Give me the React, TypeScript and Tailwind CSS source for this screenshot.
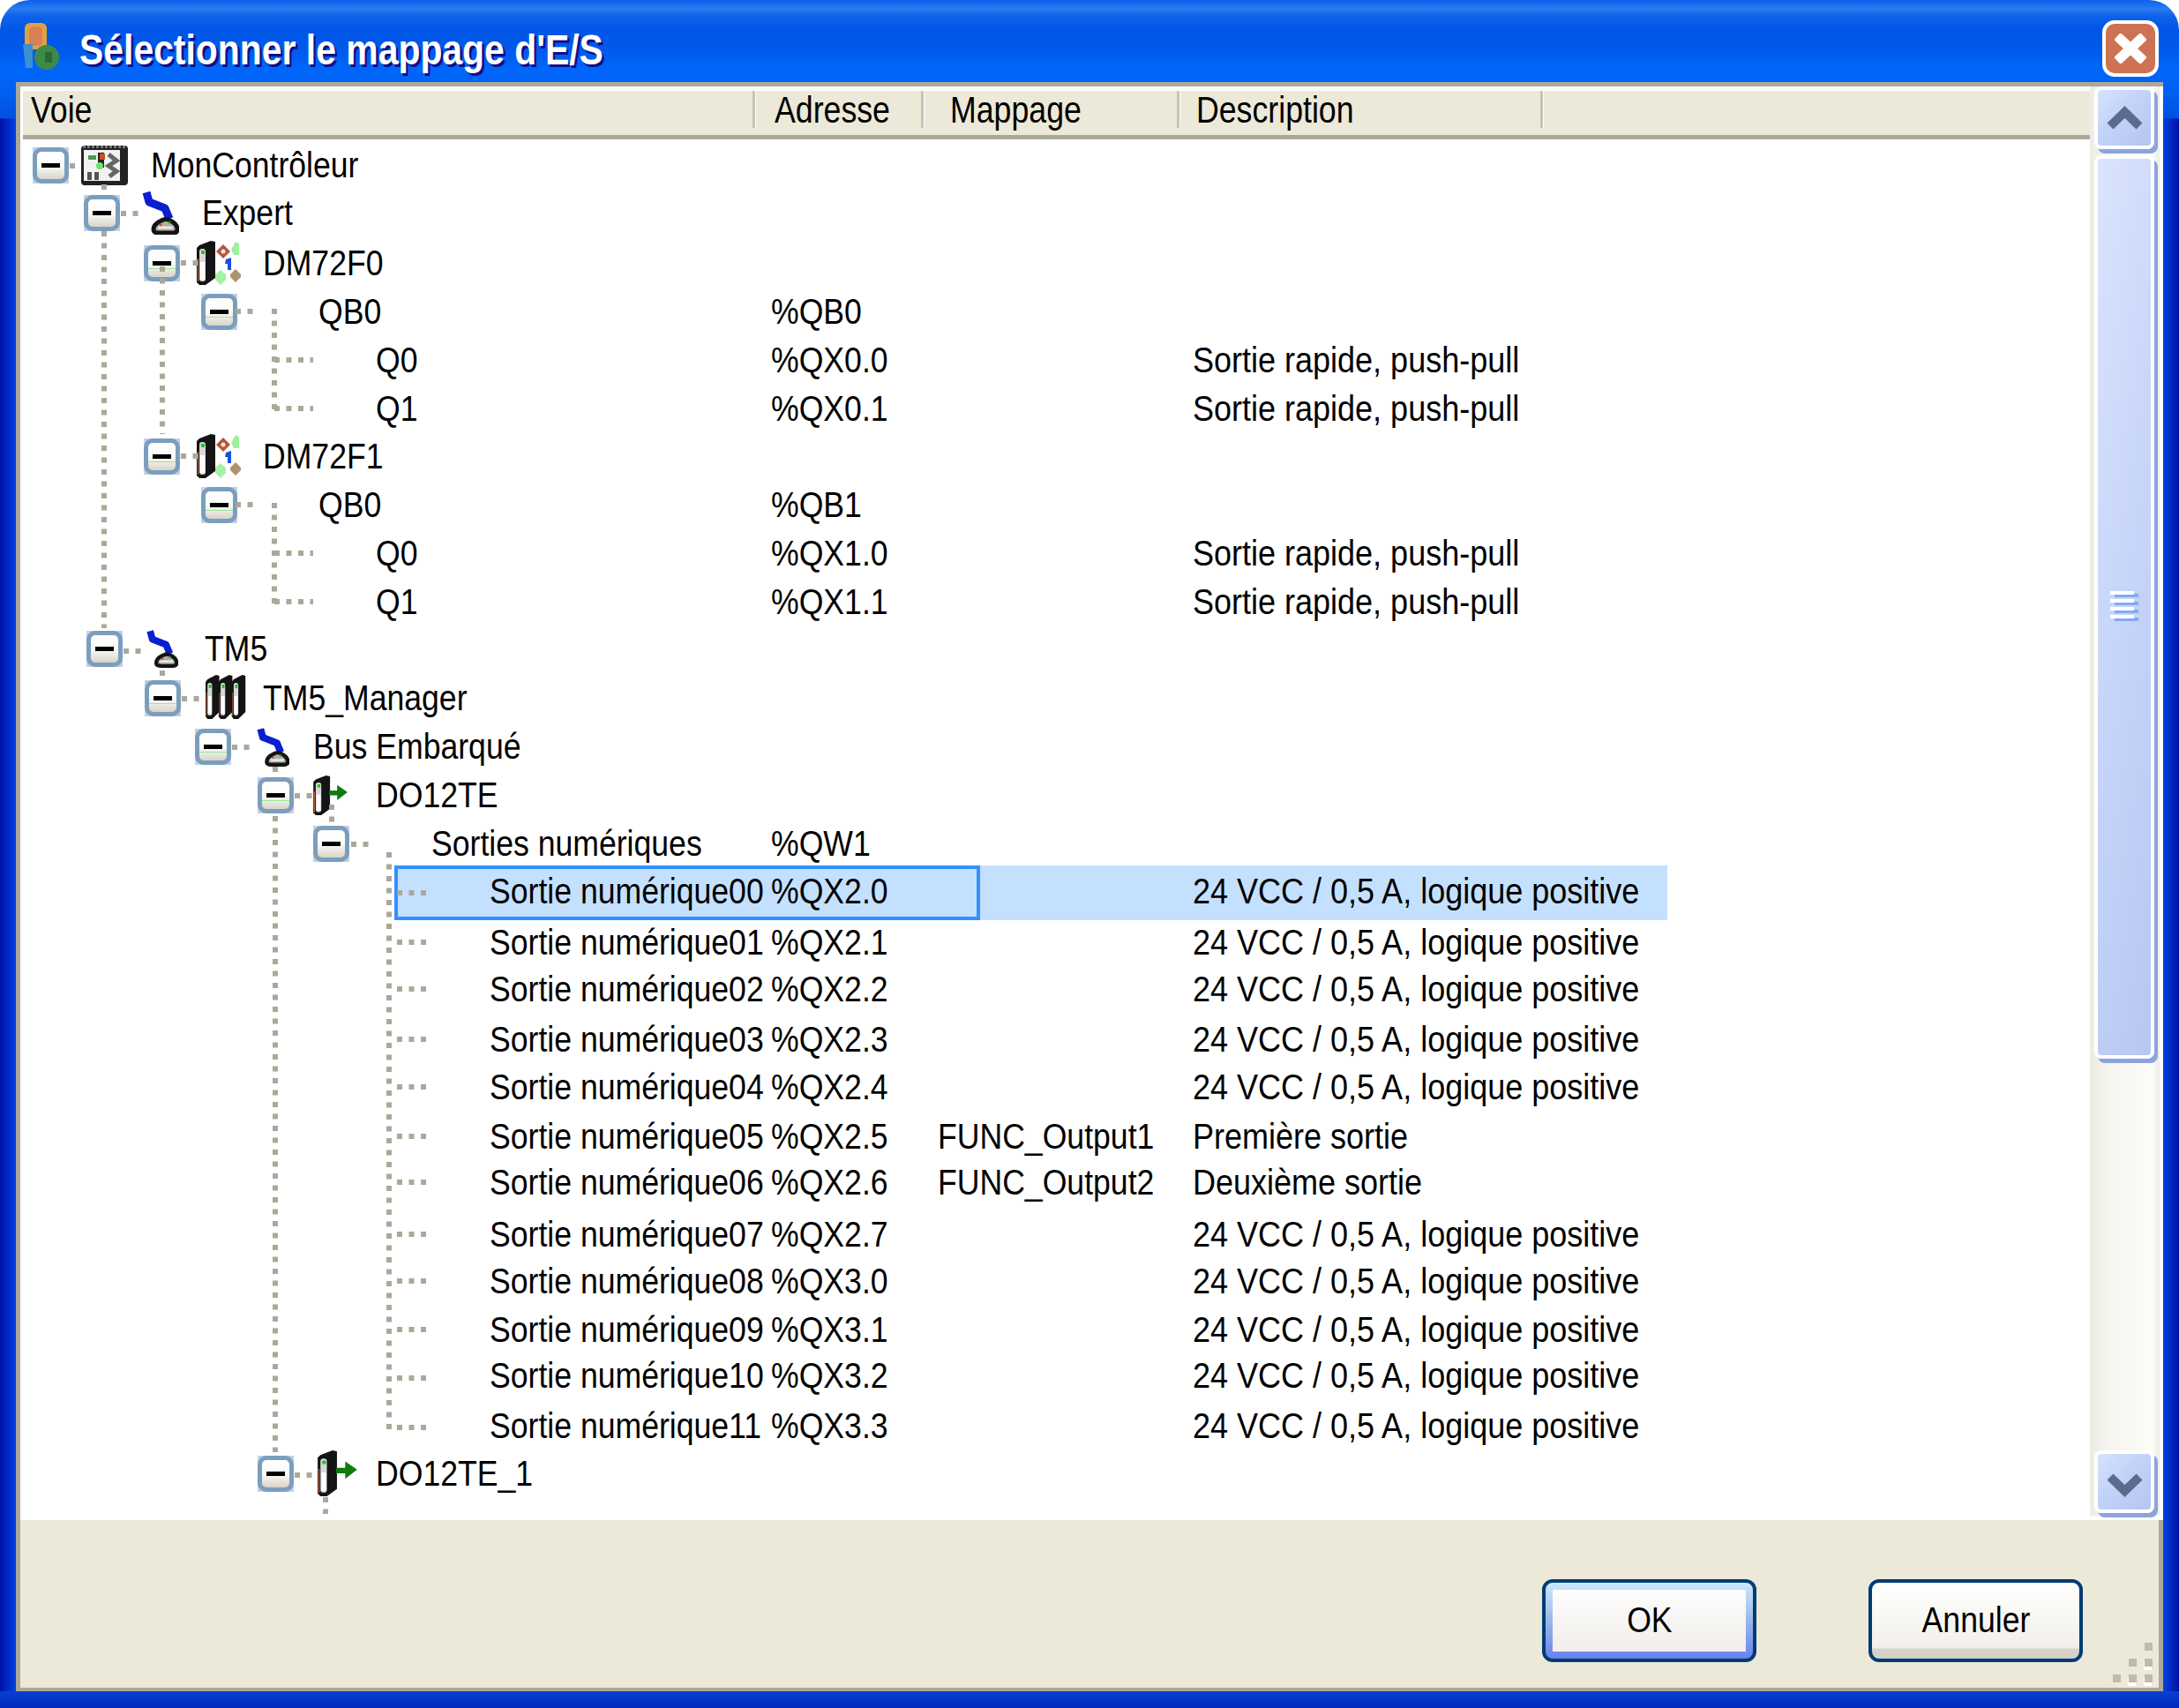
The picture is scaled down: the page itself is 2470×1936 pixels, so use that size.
import type { ReactNode } from 'react';

const sans = "font-['Liberation_Sans',Arial,sans-serif]";
const narrow = 'block origin-left scale-x-[0.89] whitespace-nowrap';
const descNarrow = 'block origin-left scale-x-[0.9] whitespace-nowrap';

function Expander({ green }: { green?: boolean }) {
  return (
    <div className="w-[41px] h-[41px] shrink-0 bg-[#c3d0e5]">
      <div className="relative w-full h-full rounded-[10px] border-[5px] border-[#7b9ebd] bg-[linear-gradient(180deg,#ffffff_0%,#fbfbf9_50%,#d8d4c8_100%)]">
        <div className="absolute left-[5px] top-[13px] w-[21px] h-[5px] bg-black" />
        {green && <div className="absolute left-0 right-0 top-[21px] h-[1px] bg-[#9be89b]" />}
      </div>
    </div>
  );
}

function ArmIcon({ className }: { className: string }) {
  return (
    <svg viewBox="0 0 43 50" className={className}>
      <path d="M6 2 L9 13 L27 20 L32 32" fill="none" stroke="#0a1fd0" strokeWidth="9" strokeLinejoin="round" />
      <path d="M14 44 Q14 38 23 34 Q28 31 33 34 Q41 38 41 44 Q41 48 36 48 L20 48 Q14 48 14 44Z" fill="#b0aca8" stroke="#141414" strokeWidth="5" />
      <path d="M19 42 H36" stroke="#ece8e4" strokeWidth="3" />
      <circle cx="22" cy="39" r="1.4" fill="#c0532b" />
      <circle cx="32" cy="36" r="1.4" fill="#16a016" />
    </svg>
  );
}

function ControllerIcon() {
  return (
    <svg viewBox="0 0 54 47" className="w-[54px] h-[47px] shrink-0">
      <rect x="0" y="1" width="53" height="45" rx="4" fill="#222222" />
      <path d="M2 2.5H50" stroke="#777777" strokeWidth="3" strokeDasharray="3 2" />
      <rect x="3" y="6" width="41" height="35" fill="#f2f2f2" />
      <rect x="8" y="12" width="9" height="5" fill="#4a9a4a" />
      <rect x="19" y="9" width="7" height="17" fill="#222222" />
      <rect x="21" y="10" width="6" height="7" fill="#c0532b" />
      <circle cx="21" cy="24" r="4" fill="#6fe06f" />
      <path d="M31 11 L40 18 L31 24 L40 30 L32 36" fill="none" stroke="#666666" strokeWidth="5" />
      <rect x="7" y="31" width="5" height="9" fill="#555555" />
      <rect x="15" y="31" width="5" height="9" fill="#555555" />
    </svg>
  );
}

function ModuleBody({ x = 0 }: { x?: number }) {
  return (
    <g transform={`translate(${x} 0)`}>
      <path d="M3 5 L16 0 L21 1 L21 42 L10 50 L3 50 L0 47 L0 8 Z" fill="#141414" />
      <rect x="3" y="9" width="7" height="37" rx="3" fill="#d8d8d8" />
      <rect x="4" y="24" width="5" height="20" fill="#ffffff" />
      <circle cx="7" cy="13" r="2.2" fill="#22c322" />
      <rect x="1" y="20" width="1" height="26" fill="#d86a3c" />
    </g>
  );
}

function DmIcon() {
  return (
    <svg viewBox="0 0 50 51" className="w-[50px] h-[51px] shrink-0">
      <ModuleBody />
      <path d="M30 4 L38 12 L30 20 L22 12 Z" fill="#b5573a" />
      <circle cx="30" cy="12" r="2.5" fill="#f4e8e0" />
      <path d="M44 1 L48 3 L48 16 L42 16 L39 10 Z" fill="#9df09d" />
      <path d="M33 21 L39 19 L39 33 L35 33 L35 26 L32 26 Z" fill="#1c50e0" />
      <path d="M27 33 L33 38 L33 44 L27 50 L21 44 L21 38 Z" fill="#a6f0a6" />
      <path d="M44 32 L50 38 L50 41 L44 47 L38 41 L38 38 Z" fill="#c08a6c" />
      <circle cx="44" cy="39" r="2.5" fill="#6fae7c" />
    </svg>
  );
}

function DoIcon({ className }: { className: string }) {
  return (
    <svg viewBox="0 0 44 50" className={className}>
      <ModuleBody />
      <path d="M20 22 H33" stroke="#0f7a10" strokeWidth="6" />
      <path d="M30 12 L43 21 L30 31 Z" fill="#0f7a10" />
    </svg>
  );
}

function ManagerIcon() {
  return (
    <svg viewBox="0 0 62 52" className="w-[46px] h-[52px] shrink-0" preserveAspectRatio="none">
      <ModuleBody x={0} />
      <ModuleBody x={20} />
      <ModuleBody x={40} />
    </svg>
  );
}

interface RowData {
  h: string;
  indent: string;
  box?: boolean;
  green?: boolean;
  icon?: ReactNode;
  iconGap?: string;
  textGap?: string;
  label: string;
  addr?: string;
  map?: string;
  desc?: string;
  selected?: boolean;
}

const rapid = 'Sortie rapide, push-pull';
const vcc = '24 VCC / 0,5 A, logique positive';

const rows: RowData[] = [
  { h: 'h-[54px]', indent: 'ml-[11px]', box: true, icon: <ControllerIcon />, iconGap: 'ml-[14px]', textGap: 'ml-[25px]', label: 'MonContrôleur' },
  { h: 'h-[57px]', indent: 'ml-[69px]', box: true, icon: <ArmIcon className="w-[43px] h-[50px] shrink-0" />, iconGap: 'ml-[24px]', textGap: 'ml-[26px]', label: 'Expert' },
  { h: 'h-[55px]', indent: 'ml-[137px]', box: true, green: true, icon: <DmIcon />, iconGap: 'ml-[19px]', textGap: 'ml-[25px]', label: 'DM72F0' },
  { h: 'h-[55px]', indent: 'ml-[202px]', box: true, green: true, textGap: 'ml-[92px]', label: 'QB0', addr: '%QB0' },
  { h: 'h-[55px]', indent: 'ml-[400px]', label: 'Q0', addr: '%QX0.0', desc: rapid },
  { h: 'h-[54px]', indent: 'ml-[400px]', label: 'Q1', addr: '%QX0.1', desc: rapid },
  { h: 'h-[55px]', indent: 'ml-[137px]', box: true, green: true, icon: <DmIcon />, iconGap: 'ml-[19px]', textGap: 'ml-[25px]', label: 'DM72F1' },
  { h: 'h-[55px]', indent: 'ml-[202px]', box: true, green: true, textGap: 'ml-[92px]', label: 'QB0', addr: '%QB1' },
  { h: 'h-[55px]', indent: 'ml-[400px]', label: 'Q0', addr: '%QX1.0', desc: rapid },
  { h: 'h-[53px]', indent: 'ml-[400px]', label: 'Q1', addr: '%QX1.1', desc: rapid },
  { h: 'h-[56px]', indent: 'ml-[72px]', box: true, icon: <ArmIcon className="w-[37px] h-[46px] shrink-0" />, iconGap: 'ml-[26px]', textGap: 'ml-[30px]', label: 'TM5' },
  { h: 'h-[55px]', indent: 'ml-[138px]', box: true, green: true, icon: <ManagerIcon />, iconGap: 'ml-[28px]', textGap: 'ml-[19px]', label: 'TM5_Manager' },
  { h: 'h-[55px]', indent: 'ml-[195px]', box: true, green: true, icon: <ArmIcon className="w-[38px] h-[47px] shrink-0" />, iconGap: 'ml-[28px]', textGap: 'ml-[27px]', label: 'Bus Embarqué' },
  { h: 'h-[55px]', indent: 'ml-[266px]', box: true, green: true, icon: <DoIcon className="w-[44px] h-[45px] shrink-0" />, iconGap: 'ml-[20px]', textGap: 'ml-[29px]', label: 'DO12TE' },
  { h: 'h-[54px]', indent: 'ml-[329px]', box: true, textGap: 'ml-[93px]', label: 'Sorties numériques', addr: '%QW1' },
  { h: 'h-[58px]', indent: 'ml-[529px]', label: 'Sortie numérique00', addr: '%QX2.0', desc: vcc, selected: true },
  { h: 'h-[53px]', indent: 'ml-[529px]', label: 'Sortie numérique01', addr: '%QX2.1', desc: vcc },
  { h: 'h-[57px]', indent: 'ml-[529px]', label: 'Sortie numérique02', addr: '%QX2.2', desc: vcc },
  { h: 'h-[54px]', indent: 'ml-[529px]', label: 'Sortie numérique03', addr: '%QX2.3', desc: vcc },
  { h: 'h-[56px]', indent: 'ml-[529px]', label: 'Sortie numérique04', addr: '%QX2.4', desc: vcc },
  { h: 'h-[52px]', indent: 'ml-[529px]', label: 'Sortie numérique05', addr: '%QX2.5', map: 'FUNC_Output1', desc: 'Première sortie' },
  { h: 'h-[59px]', indent: 'ml-[529px]', label: 'Sortie numérique06', addr: '%QX2.6', map: 'FUNC_Output2', desc: 'Deuxième sortie' },
  { h: 'h-[53px]', indent: 'ml-[529px]', label: 'Sortie numérique07', addr: '%QX2.7', desc: vcc },
  { h: 'h-[55px]', indent: 'ml-[529px]', label: 'Sortie numérique08', addr: '%QX3.0', desc: vcc },
  { h: 'h-[52px]', indent: 'ml-[529px]', label: 'Sortie numérique09', addr: '%QX3.1', desc: vcc },
  { h: 'h-[57px]', indent: 'ml-[529px]', label: 'Sortie numérique10', addr: '%QX3.2', desc: vcc },
  { h: 'h-[54px]', indent: 'ml-[529px]', label: 'Sortie numérique11', addr: '%QX3.3', desc: vcc },
  { h: 'h-[54px]', indent: 'ml-[266px]', box: true, icon: <DoIcon className="w-[50px] h-[52px] shrink-0" />, iconGap: 'ml-[25px]', textGap: 'ml-[18px]', label: 'DO12TE_1' },
];

function TreeRow({ row }: { row: RowData }) {
  return (
    <div className={`relative ${row.h}`}>
      {row.selected && (
        <>
          <div className="absolute left-[421px] top-[-2px] w-[1443px] h-[62px] bg-[#c4e0ff]" />
          <div className="absolute left-[421px] top-[-2px] w-[664px] h-[62px] border-[4px] border-[#3390ff]" />
        </>
      )}
      <div className="relative grid grid-cols-[848px_189px_289px_1fr] h-[54px] items-center text-[40px] leading-[40px] text-black">
        <div className="flex items-center">
          <div className={row.box ? `${row.indent} shrink-0` : 'hidden'}>
            <Expander green={row.green} />
          </div>
          {row.icon && <div className={`${row.iconGap} flex items-center`}>{row.icon}</div>}
          <span className={`${narrow} ${row.box ? row.textGap : row.indent}`}>{row.label}</span>
        </div>
        <span className={narrow}>{row.addr}</span>
        <span className={narrow}>{row.map}</span>
        <span className={descNarrow}>{row.desc}</span>
      </div>
    </div>
  );
}

function HeaderCell({ width, pad, label }: { width: string; pad: string; label: string }) {
  return (
    <div className={`${width} ${pad} h-[42px] flex items-center rounded-r-[2px] border-r-[3px] border-[#c5c2bc] shadow-[1px_0_0_#ffffff]`}>
      <span className="block origin-left scale-x-[0.83] whitespace-nowrap">{label}</span>
    </div>
  );
}

function Connectors() {
  const vertical = [
    'M118 262V712',
    'M184 302V492',
    'M184 760V770',
    'M311 350V466',
    'M311 570V685',
    'M312 869V875',
    'M312 925V1646',
    'M376 912V935',
    'M441 966V1620',
    'M369 1697V1716',
    'M118 209V215',
  ].join(' ');
  const horizontal = [
    'M79 188H85',
    'M137 242H160',
    'M205 298H225',
    'M267 353H290',
    'M205 517H225',
    'M267 572H290',
    'M311 408H355',
    'M311 463H355',
    'M311 627H355',
    'M311 682H355',
    'M140 738H163',
    'M206 792H229',
    'M263 847H286',
    'M334 902H357',
    'M398 957H421',
    'M334 1672H357',
    'M450 1012H483',
    'M450 1068H483',
    'M450 1121H483',
    'M450 1178H483',
    'M450 1232H483',
    'M450 1288H483',
    'M450 1340H483',
    'M450 1399H483',
    'M450 1452H483',
    'M450 1507H483',
    'M450 1562H483',
    'M450 1618H483',
  ].join(' ');
  return (
    <svg className="absolute left-0 top-0 w-[2470px] h-[1936px] pointer-events-none" viewBox="0 0 2470 1936">
      <path d={vertical} stroke="#aca899" strokeWidth="6" strokeDasharray="6 7.5" fill="none" />
      <path d={horizontal} stroke="#aca899" strokeWidth="6" strokeDasharray="6 7.5" fill="none" />
    </svg>
  );
}

function ScrollButton({ dir }: { dir: 'up' | 'down' }) {
  return (
    <div className="w-[68px] h-[71px] shrink-0 flex items-center justify-center rounded-[8px] border-[4px] border-white bg-[linear-gradient(135deg,#d6e3fd_0%,#c2d2f9_45%,#b4c5f1_100%)] shadow-[4px_5px_0_#8ba4dd]">
      {dir === 'up' ? (
        <svg viewBox="0 0 41 27" className="w-[41px] h-[27px]">
          <path d="M4 23 L20.5 7 L37 23" fill="none" stroke="#5a6b8c" strokeWidth="10" />
        </svg>
      ) : (
        <svg viewBox="0 0 41 27" className="w-[41px] h-[27px] mt-[8px]">
          <path d="M4 4 L20.5 20 L37 4" fill="none" stroke="#5a6b8c" strokeWidth="10" />
        </svg>
      )}
    </div>
  );
}

function Scrollbar() {
  return (
    <div className="w-[79px] shrink-0 flex flex-col pl-[5px] pt-0 pb-[3px] bg-[linear-gradient(90deg,#ecece4_0%,#f6f5f0_30%,#fdfdf9_90%,#ecece4_100%)]">
      <ScrollButton dir="up" />
      <div className="mt-[7px] w-[68px] h-[1024px] flex items-center justify-center rounded-[8px] border-[4px] border-white bg-[linear-gradient(100deg,#dbe4fd_0%,#c8d6f9_45%,#b6c7f3_100%)] shadow-[4px_5px_0_#8ba4dd]">
        <svg viewBox="0 0 32 36" className="w-[32px] h-[36px]">
          <path d="M5 5H32 M5 14H32 M5 23H32 M5 32H32" stroke="#83aaec" strokeWidth="4" />
          <path d="M0 2H27 M0 11H27 M0 20H27 M0 29H27" stroke="#ffffff" strokeWidth="4" />
        </svg>
      </div>
      <div className="flex-1" />
      <ScrollButton dir="down" />
    </div>
  );
}

function ResizeGrip() {
  return (
    <svg viewBox="0 0 50 50" className="absolute right-[2px] bottom-[2px] w-[50px] h-[50px]">
      <path d="M35 41h9v9h-9z M17 41h9v9h-9z M35 23h9v9h-9z" fill="#ffffff" />
      <path d="M0 37h9v9H0z M18 37h9v9h-9z M36 37h9v9h-9z M18 19h9v9h-9z M36 19h9v9h-9z M36 1h9v9h-9z" fill="#bfbbaa" />
    </svg>
  );
}

export default function App() {
  return (
    <div className={`relative w-[2470px] h-[1936px] overflow-hidden bg-white ${sans}`}>
      <div className="flex flex-col w-full h-full rounded-t-[34px] bg-[linear-gradient(180deg,#0b5fe9_0px,#2a7cf0_10px,#0f62ea_18px,#0055e4_34px,#005bee_60px,#0066fb_78px,#0060f2_105px,#0050e0_134px,transparent_135px),linear-gradient(90deg,#0010a8_0px,#0042e0_18px,#0042e0_2452px,#0010a0_2470px)]">
        {/* Title bar */}
        <div className="flex items-start h-[93px] shrink-0 pl-[25px] pr-[23px]">
          <svg viewBox="0 0 44 54" className="mt-[25px] w-[44px] h-[54px] shrink-0">
            <rect x="3" y="1" width="25" height="30" rx="6" fill="#e0a33c" />
            <rect x="8" y="5" width="15" height="22" rx="5" fill="#d9805a" />
            <path d="M1 25h11v27H4z" fill="#3d8fd0" />
            <circle cx="28" cy="40" r="14" fill="#3f8a4a" />
            <rect x="26" y="34" width="8" height="12" fill="#2a6a34" />
          </svg>
          <span className="mt-[21px] ml-[21px] block origin-left scale-x-[0.852] whitespace-nowrap text-[48px] font-bold text-white [text-shadow:3px_3px_0_#0f1089]">
            Sélectionner le mappage d'E/S
          </span>
          <div className="mt-[23px] ml-auto w-[64px] h-[64px] rounded-[14px] border-[4px] border-white bg-[#cd7353] flex items-center justify-center">
            <svg viewBox="0 0 36 34" className="w-[36px] h-[34px]">
              <path d="M3 3 L33 31 M33 3 L3 31" stroke="#ffffff" strokeWidth="11" />
            </svg>
          </div>
        </div>

        {/* Client area */}
        <div className="flex flex-col flex-1 ml-[18px] mr-[18px] min-h-0 border-t-[5px] border-l-[5px] border-[#aca899] bg-white">
          <div className="flex h-[1620px] shrink-0 pr-[4px]">
            <div className="flex-1 min-w-0 pl-[3px] pt-[5px]">
              <div className="flex h-[55px] bg-[#ece9d8] border-b-[5px] border-[#aca899] text-[43px] text-black">
                <HeaderCell width="w-[830px]" pad="pl-[9px]" label="Voie" />
                <HeaderCell width="w-[191px]" pad="pl-[22px]" label="Adresse" />
                <HeaderCell width="w-[290px]" pad="pl-[30px]" label="Mappage" />
                <HeaderCell width="w-[412px]" pad="pl-[19px]" label="Description" />
              </div>
              <div className="pt-[2px] h-[1560px] overflow-hidden">
                {rows.map((row, i) => (
                  <TreeRow key={i} row={row} />
                ))}
              </div>
            </div>
            <Scrollbar />
          </div>

          {/* Button panel */}
          <div className="relative mt-[5px] flex-1 flex justify-end items-start gap-[127px] pt-[67px] pr-[86px] bg-[#ece9d8] border-b-[4px] border-r-[5px] border-[#aca899] text-[40px] text-black">
            <button type="button" className="w-[243px] h-[94px] rounded-[12px] border-[4px] border-[#003c74] p-[8px] bg-[linear-gradient(180deg,#cee7ff_0%,#98b8ea_50%,#6982ee_100%)]">
              <span className="flex items-center justify-center w-full h-full pb-[2px] bg-[linear-gradient(180deg,#fdfdfb_0%,#f8f6f6_40%,#f4f3ef_70%,#f2eeee_100%)]">
                <span className="block scale-x-[0.89]">OK</span>
              </span>
            </button>
            <button type="button" className="w-[243px] h-[94px] rounded-[12px] border-[4px] border-[#003c74] pb-[2px] bg-[linear-gradient(180deg,#ffffff_0%,#f8f8f4_40%,#f4f3ef_70%,#f2eeee_85%,#d6d2c8_88%,#d6d2c8_100%)] flex items-center justify-center">
              <span className="block scale-x-[0.89]">Annuler</span>
            </button>
            <ResizeGrip />
          </div>
        </div>
        <div className="h-[19px] shrink-0 bg-[linear-gradient(180deg,#0a3fd0,#0028b8)]" />
      </div>
      <Connectors />
    </div>
  );
}
